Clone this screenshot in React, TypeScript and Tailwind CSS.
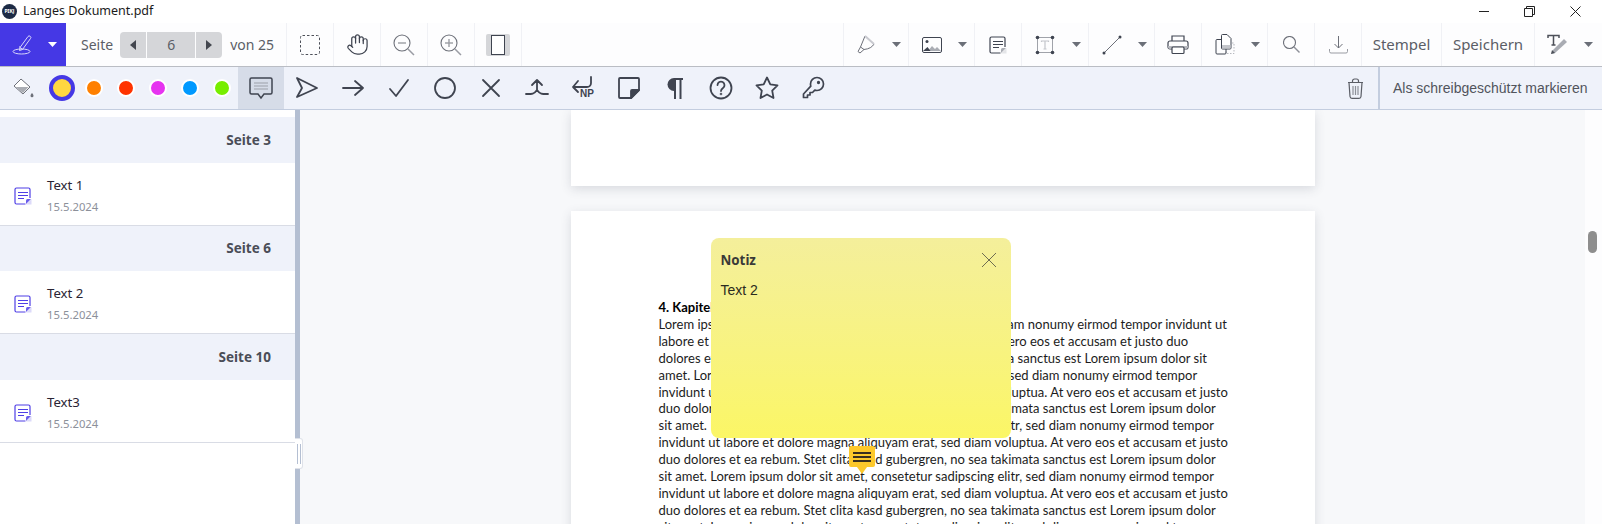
import type { ReactNode } from "react";

const ink = "#3f4450";

const loremLines = [
  "Lorem ipsum dolor sit amet, consetetur sadipscing elitr, sed diam nonumy eirmod tempor invidunt ut",
  "labore et dolore magna aliquyam erat, sed diam voluptua. At vero eos et accusam et justo duo",
  "dolores et ea rebum. Stet clita kasd gubergren, no sea takimata sanctus est Lorem ipsum dolor sit",
  "amet. Lorem ipsum dolor sit amet, consetetur sadipscing elitr, sed diam nonumy eirmod tempor",
  "invidunt ut labore et dolore magna aliquyam erat, sed diam voluptua. At vero eos et accusam et justo",
  "duo dolores et ea rebum. Stet clita kasd gubergren, no sea takimata sanctus est Lorem ipsum dolor",
  "sit amet. Lorem ipsum dolor sit amet, consetetur sadipscing elitr, sed diam nonumy eirmod tempor",
  "invidunt ut labore et dolore magna aliquyam erat, sed diam voluptua. At vero eos et accusam et justo",
  "duo dolores et ea rebum. Stet clita kasd gubergren, no sea takimata sanctus est Lorem ipsum dolor",
  "sit amet. Lorem ipsum dolor sit amet, consetetur sadipscing elitr, sed diam nonumy eirmod tempor",
  "invidunt ut labore et dolore magna aliquyam erat, sed diam voluptua. At vero eos et accusam et justo",
  "duo dolores et ea rebum. Stet clita kasd gubergren, no sea takimata sanctus est Lorem ipsum dolor",
  "sit amet. Lorem ipsum dolor sit amet, consetetur sadipscing elitr, sed diam nonumy eirmod tempor",
];

const notes = [
  { page: "Seite 3", title: "Text 1", head: "h-[46px]" },
  { page: "Seite 6", title: "Text 2", head: "h-[45px]" },
  { page: "Seite 10", title: "Text3", head: "h-[46px]" },
];

const Caret = ({ color = "#6b6f78" }: { color?: string }) => (
  <svg width="9" height="5" viewBox="0 0 9 5">
    <path d="M0 0h9L4.5 5z" fill={color} />
  </svg>
);

const Tool = ({ w, children }: { w: string; children: ReactNode }) => (
  <div className={`${w} flex shrink-0 items-center justify-center border-r border-[#f0f1f5]`}>{children}</div>
);

const CaretTool = ({ w, children }: { w: string; children: ReactNode }) => (
  <div className={`${w} flex shrink-0 items-center justify-between border-r border-[#f0f1f5] pl-[13px] pr-[7px]`}>
    {children}
    <Caret />
  </div>
);

const NoteIcon = ({ color = ink, fold = "#a9acb3", foldBg = "#e4e5e8" }: { color?: string; fold?: string; foldBg?: string }) => (
  <svg width="18" height="18" viewBox="0 0 18 18" fill="none">
    <path d="M12 17.500h5.500V12z" fill={foldBg} />
    <path d="M11.500 17H2.500A1.500 1.500 0 0 1 1 15.500V2.500A1.500 1.500 0 0 1 2.500 1h12A1.500 1.500 0 0 1 16 2.500V11" stroke={color} strokeWidth="1.200" />
    <path d="M4 5.500h10M4 8.500h10M4 11.500h6" stroke={color} strokeWidth="1.200" />
    <path d="M12 17v-3.500a1.500 1.500 0 0 1 1.500-1.500H17z" fill={fold} />
  </svg>
);

const Zoom = ({ plus }: { plus?: boolean }) => (
  <svg width="22" height="22" viewBox="0 0 22 22" fill="none" stroke="#6d7079" strokeWidth="1.100">
    <circle cx="9" cy="9" r="8" />
    <path d="M5 9h8" strokeWidth="1.400" stroke="#9a9ca3" />
    {plus && <path d="M9 5v8" strokeWidth="1.400" stroke="#9a9ca3" />}
    <path d="M15 15l6 6" stroke="#9a9ca3" strokeWidth="1.500" />
  </svg>
);

const TitleBar = () => (
  <div className="flex h-[23px] items-center bg-white pl-[2px]">
    <div className="flex h-[15px] w-[15px] items-center justify-center rounded-full bg-[#1d2b45] text-[5px] font-bold text-white">
      PIKJ
    </div>
    <span className="ml-[6px] font-['Noto_Sans',sans-serif] text-[12.500px] text-[#1b1b1b]">Langes Dokument.pdf</span>
    <div className="ml-auto mr-[21px] flex items-center gap-[35px]">
      <svg width="10" height="12" viewBox="0 0 10 12" fill="none" stroke="#222" strokeWidth="1">
        <path d="M0 5.500h10" />
      </svg>
      <svg width="11" height="11" viewBox="0 0 11 11" fill="none" stroke="#222" strokeWidth="1">
        <path d="M.5 2.500h8v8h-8zM2.500 2.500V.5h8v8h-2" />
      </svg>
      <svg width="11" height="11" viewBox="0 0 11 11" fill="none" stroke="#222" strokeWidth="1">
        <path d="M.5.5l10 10M10.500.5l-10 10" />
      </svg>
    </div>
  </div>
);

const TopBar = () => (
  <div className="flex h-[44px] items-stretch border-b border-[#babdc4] bg-[#fdfdfe] font-['Noto_Sans',sans-serif] text-[14px] text-[#5b5e66]">
    <div className="flex w-[66px] shrink-0 items-center gap-[15px] bg-[#4538e5] pl-[12px]">
      <svg width="21" height="21" viewBox="0 0 21 21" fill="none" stroke="#d9d6fb" strokeWidth="1">
        <ellipse cx="9.500" cy="17.500" rx="8.500" ry="2.500" />
        <path d="M8 13.500L16 2.500a1.500 1.500 0 0 1 2.200-.2 1.500 1.500 0 0 1 .3 2.200L10.500 15.500 7.500 16.500z" />
        <path d="M7 12.500l3.500 3" />
      </svg>
      <Caret color="#ffffff" />
    </div>
    <div className="flex w-[221px] shrink-0 items-center border-r border-[#f0f1f5] pl-[15px]">
      <span>Seite</span>
      <div className="ml-[7px] flex h-[26px] gap-px overflow-hidden rounded-[4px] text-[#5b5e66]">
        <div className="flex w-[26px] items-center justify-center bg-[#d5d6d9]">
          <svg width="6" height="10" viewBox="0 0 6 10"><path d="M6 0v10L0 5z" fill="#44474f" /></svg>
        </div>
        <div className="flex w-[48px] items-center justify-center bg-[#d5d6d9]">6</div>
        <div className="flex w-[26px] items-center justify-center bg-[#d5d6d9]">
          <svg width="6" height="10" viewBox="0 0 6 10"><path d="M0 0v10l6-5z" fill="#44474f" /></svg>
        </div>
      </div>
      <span className="ml-[8px]">von 25</span>
    </div>
    <Tool w="w-[47px]">
      <svg width="20" height="20" viewBox="0 0 20 20" fill="none" stroke="#4d5059" strokeWidth="1" strokeDasharray="2.500 2">
        <rect x="0.500" y="0.500" width="19" height="19" rx="2" />
      </svg>
    </Tool>
    <Tool w="w-[47px]">
      <svg width="23" height="23" viewBox="0 0 24 24" fill="none" stroke="#3f4450" strokeWidth="1.300" strokeLinecap="round" strokeLinejoin="round">
        <path d="M18 11V6a2 2 0 0 0-2-2 2 2 0 0 0-2 2" />
        <path d="M14 10V4a2 2 0 0 0-2-2 2 2 0 0 0-2 2v2" />
        <path d="M10 10.500V6a2 2 0 0 0-2-2 2 2 0 0 0-2 2v8" />
        <path d="M18 8a2 2 0 1 1 4 0v6a8 8 0 0 1-8 8h-2c-2.800 0-4.500-.860-5.990-2.340l-3.600-3.600a2 2 0 0 1 2.830-2.820L7 15" />
      </svg>
    </Tool>
    <Tool w="w-[47px]"><Zoom /></Tool>
    <Tool w="w-[47px]"><Zoom plus /></Tool>
    <Tool w="w-[47px]">
      <div className="flex h-[22px] w-[24px] items-center justify-center rounded-[2px] bg-[#d5d6d9]">
        <div className="h-[20px] w-[14px] border border-[#3f4450] bg-white" />
      </div>
    </Tool>

    <div className="ml-auto flex items-stretch border-l border-[#f0f1f5]">
      <CaretTool w="w-[65px]">
        <svg width="19" height="20" viewBox="0 0 19 20" fill="none" stroke="#6d7079" strokeWidth="1">
          <path d="M8 1l9 8c-1.500 3-5 5-10 5.500L3.500 12z" />
          <path d="M8 1l9 8" stroke="#c9cad0" strokeWidth="2" />
          <path d="M3.500 12L1 16.500l2 1.500 4-3.500" />
        </svg>
      </CaretTool>
      <CaretTool w="w-[66px]">
        <svg width="20" height="16" viewBox="0 0 20 16" fill="none">
          <path d="M6 14l4-5 3 3 2-2 4 4z" fill="#a9acb3" />
          <path d="M1 14l4.500-4 3 4z" fill="#3f4450" />
          <circle cx="5" cy="4.500" r="1.500" fill="#3f4450" />
          <rect x="0.500" y="0.500" width="19" height="15" rx="1.500" stroke="#3f4450" />
        </svg>
      </CaretTool>
      <Tool w="w-[47px]"><NoteIcon /></Tool>
      <CaretTool w="w-[67px]">
        <svg width="20" height="20" viewBox="0 0 20 20" fill="none">
          <rect x="2.500" y="2.500" width="15" height="15" stroke="#a0a3aa" />
          <path d="M6.500 7V6h7v1M10 6v8M8.500 14h3" stroke="#c4c6cb" strokeWidth="1.200" />
          <g fill="#3f4450">
            <circle cx="2.500" cy="2.500" r="1.800" />
            <circle cx="17.500" cy="2.500" r="1.800" />
            <circle cx="2.500" cy="17.500" r="1.800" />
            <circle cx="17.500" cy="17.500" r="1.800" />
          </g>
        </svg>
      </CaretTool>
      <CaretTool w="w-[66px]">
        <svg width="20" height="20" viewBox="0 0 20 20" fill="none">
          <path d="M2 18L18 2" stroke="#6d7079" />
          <circle cx="2" cy="18" r="1.500" fill="#3f4450" />
          <circle cx="18" cy="2" r="1.500" fill="#3f4450" />
        </svg>
      </CaretTool>
      <Tool w="w-[47px]">
        <svg width="22" height="20" viewBox="0 0 22 20" fill="none" stroke="#3f4450" strokeWidth="1.200">
          <path d="M5 6V1h12v5" />
          <path d="M5 14H3a2 2 0 0 1-2-2V8a2 2 0 0 1 2-2h16a2 2 0 0 1 2 2v4a2 2 0 0 1-2 2h-2" />
          <path d="M1 11h20v1a2 2 0 0 1-2 2H3a2 2 0 0 1-2-2z" fill="#b7b9bf" stroke="none" />
          <rect x="5" y="12" width="12" height="6.500" rx="1" fill="#fff" />
        </svg>
      </Tool>
      <CaretTool w="w-[66px]">
        <svg width="20" height="21" viewBox="0 0 20 21" fill="none" stroke="#3f4450" strokeWidth="1">
          <path d="M14 9h5v10.500h-8V17" stroke="#b7b9bf" strokeDasharray="1.500 1.500" />
          <path d="M7 5.500h-5a1 1 0 0 0-1 1V19a1 1 0 0 0 1 1h8a1 1 0 0 0 1-1V14" />
          <path d="M6.500 1.500a1 1 0 0 1 1-1H12l4 4V14a1 1 0 0 1-1 1H7.500a1 1 0 0 1-1-1z" fill="#fff" />
          <path d="M7 11h8.500v3.500H7z" fill="#c4c6cb" stroke="none" />
        </svg>
      </CaretTool>
      <Tool w="w-[47px]">
        <svg width="17" height="17" viewBox="0 0 17 17" fill="none" stroke="#6d7079" strokeWidth="1.100">
          <circle cx="6.500" cy="6.500" r="6" />
          <path d="M11 11l5.500 5.500" stroke="#8d9098" strokeWidth="1.400" />
        </svg>
      </Tool>
      <Tool w="w-[47px]">
        <svg width="19" height="19" viewBox="0 0 19 19" fill="none" stroke="#6d7079" strokeWidth="1">
          <path d="M9.500 1v12M5.500 9l4 4 4-4" />
          <path d="M.5 14v2.500a1.500 1.500 0 0 0 1.500 1.500h15a1.500 1.500 0 0 0 1.500-1.500V14" stroke="#9a9ca3" />
        </svg>
      </Tool>
      <Tool w="w-[80px]"><span className="text-[15px]">Stempel</span></Tool>
      <Tool w="w-[93px]"><span className="text-[15px]">Speichern</span></Tool>
      <div className="flex w-[67px] shrink-0 items-center justify-between pl-[12px] pr-[9px]">
        <svg width="21" height="21" viewBox="0 0 21 21" fill="none">
          <path d="M1 4V1.500h11V4M6.500 1.500V11M4.500 11h4" stroke="#4d5059" strokeWidth="1.500" />
          <path d="M4 20l4-1 12-11-3-3L6 16z" fill="#a9acb3" />
          <path d="M4 20l1-4 3 3z" fill="#4d5059" />
        </svg>
        <Caret />
      </div>
    </div>
  </div>
);

const Dot = ({ color }: { color: string }) => (
  <div className="flex h-[32px] w-[32px] items-center justify-center">
    <div className="h-[18px] w-[18px] rounded-full border-2 border-white" style={{ background: color }} />
  </div>
);

const Stroke = ({ children }: { children: ReactNode }) => (
  <div className="flex w-[46px] shrink-0 items-center justify-center">
    <svg width="24" height="24" viewBox="0 0 24 24" fill="none" stroke="#3f4450" strokeWidth="1.800" strokeLinecap="round" strokeLinejoin="round">
      {children}
    </svg>
  </div>
);

const AnnotationBar = () => (
  <div className="flex h-[43px] items-stretch border-b border-[#c3cddf] bg-[#eff2fa]">
    <div className="flex w-[46px] shrink-0 items-center justify-center">
      <svg width="22" height="20" viewBox="0 0 22 20" fill="none">
        <path d="M9 1l9 8-7 7-9-8z" stroke="#6d7079" strokeWidth="1" fill="#fff" />
        <path d="M3.500 9h13l-5.500 6z" fill="#a9acb3" />
        <path d="M20 15c1 1.300 1.500 2 1.500 2.700a1.500 1.500 0 0 1-3 0c0-.7.500-1.400 1.500-2.700z" fill="#6d7079" />
      </svg>
    </div>
    <div className="flex w-[32px] items-center justify-center">
      <div className="h-[26px] w-[26px] shrink-0 rounded-full border-[4px] border-[#4538e5] bg-[#ffd740]" />
    </div>
    <div className="flex items-center">
      <Dot color="#ff8000" />
      <Dot color="#ff3300" />
      <Dot color="#e633f0" />
      <Dot color="#0099ff" />
      <Dot color="#77ee00" />
    </div>
    <div className="flex w-[46px] shrink-0 items-center justify-center bg-[#d6dce8]">
      <svg width="24" height="23" viewBox="0 0 24 23" fill="none">
        <path d="M2.500 1h19A1.500 1.500 0 0 1 23 2.500v13a1.500 1.500 0 0 1-1.500 1.500H15l-3 4-3-4H2.500A1.500 1.500 0 0 1 1 15.500v-13A1.500 1.500 0 0 1 2.500 1z" stroke="#3f4450" strokeWidth="1.500" />
        <path d="M5 6h14M5 9h14M5 12h14" stroke="#9ca0a9" />
      </svg>
    </div>
    <Stroke>
      <path d="M2 2l20 10-20 9 5-9z" />
    </Stroke>
    <Stroke>
      <path d="M2 12h20M14 5l8 7-8 7" />
    </Stroke>
    <Stroke>
      <path d="M3 13l6 7L21 4" />
    </Stroke>
    <Stroke>
      <circle cx="12" cy="12" r="10" />
    </Stroke>
    <Stroke>
      <path d="M4 4l16 16M20 4L4 20" />
    </Stroke>
    <Stroke>
      <path d="M1 18c5 0 8 .5 11-4 3 4.500 6 4 11 4M12 14V4M7 9l5-5 5 5" />
    </Stroke>
    <div className="flex w-[46px] shrink-0 items-center justify-center">
      <div className="relative h-[24px] w-[24px]">
        <svg width="24" height="24" viewBox="0 0 24 24" fill="none" stroke="#3f4450" strokeWidth="1.800" strokeLinecap="round" strokeLinejoin="round">
          <path d="M20 1v6a4 4 0 0 1-4 4H2M7 5l-5 6 5 5" />
        </svg>
        <span className="absolute left-[9px] top-[12px] font-['Liberation_Sans',sans-serif] text-[10px] font-bold leading-[12px] text-[#3f4450]">NP</span>
      </div>
    </div>
    <Stroke>
      <path d="M22 14V3a1 1 0 0 0-1-1H3a1 1 0 0 0-1 1v18a1 1 0 0 0 1 1h11z" />
      <path d="M14 22v-7a1 1 0 0 1 1-1h7z" fill="#3f4450" />
    </Stroke>
    <div className="flex w-[46px] shrink-0 items-center justify-center">
      <svg width="16" height="21" viewBox="0 0 16 21">
        <path d="M7 0a6.500 6.500 0 0 0 0 13V0z" fill="#3f4450" />
        <path d="M7 1h9M8 0.500V21M13.500 0.500V21" stroke="#3f4450" strokeWidth="2" fill="none" />
      </svg>
    </div>
    <Stroke>
      <circle cx="12" cy="12" r="10.500" />
      <path d="M8.500 9a3.500 3.500 0 1 1 5.500 3c-1.300.9-2 1.500-2 3" />
      <circle cx="12" cy="18" r=".4" />
    </Stroke>
    <Stroke>
      <path d="M12 1.500l3.300 6.900 7.200 1-5.300 5.200 1.300 7.400L12 18.500 5.500 22l1.300-7.400L1.500 9.400l7.200-1z" />
    </Stroke>
    <div className="flex w-[46px] shrink-0 items-center justify-center">
      <svg width="24" height="24" viewBox="0 0 24 24" fill="none" stroke="#3f4450" strokeWidth="1.700" strokeLinecap="round" strokeLinejoin="round">
        <path d="M9.500 8a6.500 6.500 0 1 1 6.500 6.500c-.8 0-1.500-.1-2.200-.4L11.500 16.500H9v2.500H6.500v2.500H2.500v-3.500L9.800 10.200A6.500 6.500 0 0 1 9.500 8z" />
        <circle cx="17.500" cy="6.500" r=".8" />
      </svg>
    </div>
    <div className="ml-auto flex w-[46px] items-center justify-center">
      <svg width="17" height="21" viewBox="0 0 17 21" fill="none" stroke="#5b5e66" strokeWidth="1.200">
        <path d="M1 4.500h15M5.500 4.500V3a2 2 0 0 1 2-2h2a2 2 0 0 1 2 2v1.500" />
        <path d="M2 4.500h13l-1 14a2 2 0 0 1-2 1.800H5a2 2 0 0 1-2-1.800z" />
        <path d="M6 8v9M8.500 8v9M11 8v9" stroke="#8d9098" />
      </svg>
    </div>
    <div className="flex w-[224px] shrink-0 items-center border-l-2 border-[#c3cddf] pl-[13px] font-['Liberation_Sans',sans-serif] text-[14px] text-[#51545c]">
      Als schreibgeschützt markieren
    </div>
  </div>
);

const Sidebar = () => (
  <div className="relative flex w-[300px] shrink-0 flex-col border-r-[5px] border-[#b4bfd2] bg-white pt-[7px] font-['Noto_Sans',sans-serif]">
    {notes.map((n) => (
      <div key={n.page}>
        <div className={`${n.head} flex items-center justify-end bg-[#eff2fa] pr-[24px] text-[13.500px] font-bold text-[#4a4d57]`}>{n.page}</div>
        <div className="flex h-[63px] items-center border-b border-[#d9dce5] pl-[14px] pt-[4px]">
          <NoteIcon color="#4f3fe6" fold="#6a5cec" foldBg="#dcdaf9" />
          <div className="ml-[15px] flex flex-col">
            <span className="text-[13.200px] leading-[20px] text-[#2a2433]">{n.title}</span>
            <span className="mt-[2px] text-[11.300px] leading-[20px] text-[#8c909a]">15.5.2024</span>
          </div>
        </div>
      </div>
    ))}
    <div className="absolute right-[-8px] top-[328px] flex h-[31px] w-[8px] items-center justify-center gap-[2px] rounded-r-[3px] border border-l-0 border-[#dfe2e9] bg-white">
      <div className="h-[20px] w-px bg-[#b4bfd2]" />
      <div className="h-[20px] w-px bg-[#b4bfd2]" />
    </div>
  </div>
);

const NotePopup = () => (
  <>
    <div className="absolute left-[140px] top-[27px] h-[200px] w-[300px] rounded-[8px] bg-gradient-to-b from-[#f4ef9b] to-[#fbf665] px-[10px] pt-[11px]">
      <div className="flex items-center justify-between">
        <span className="font-['Noto_Sans',sans-serif] text-[13.300px] font-bold leading-[22px] text-[#3a3a38]">Notiz</span>
        <svg width="14" height="14" viewBox="0 0 14 14" stroke="#333" strokeWidth=".7" className="mr-[5px]">
          <path d="M0 0l14 14M14 0L0 14" />
        </svg>
      </div>
      <div className="mt-[9px] font-['Liberation_Sans',sans-serif] text-[14px] leading-[20px] text-[#2b2b20]">Text 2</div>
    </div>
    <div className="absolute left-[278px] top-[235px] flex h-[21px] w-[26px] flex-col items-center justify-center gap-[2px] rounded-[2px] bg-[#fdc92b]">
      <div className="h-[2px] w-[18px] bg-[#3a3020]" />
      <div className="h-[2px] w-[18px] bg-[#3a3020]" />
      <div className="h-[2px] w-[18px] bg-[#3a3020]" />
      <div className="absolute bottom-[-7px] left-[8px] h-0 w-0 border-x-[5px] border-t-[7px] border-x-transparent border-t-[#fdc92b]" />
    </div>
  </>
);

const Viewer = () => (
  <div className="flex min-w-0 flex-1 bg-[#f7f8fa]">
    <div className="flex min-w-0 flex-1 flex-col items-center overflow-hidden">
      <div className="h-[76px] w-[744px] shrink-0 bg-white shadow-[0_3px_10px_rgba(60,70,90,0.16)]" />
      <div className="relative mt-[25px] w-[744px] shrink-0 bg-white pl-[88px] pt-[88px] font-['Lato',sans-serif] text-[13px] leading-[16.900px] text-[#1c1c1c] shadow-[0_3px_10px_rgba(60,70,90,0.16)]">
        <div className="font-bold text-black">4. Kapitel</div>
        {loremLines.map((line, i) => (
          <div key={i} className="whitespace-nowrap">{line}</div>
        ))}
        <NotePopup />
      </div>
    </div>
    <div className="relative w-[17px] shrink-0 bg-[#fdfdfe]">
      <div className="absolute left-[3px] top-[121px] h-[22px] w-[9px] rounded-full bg-[#8e8e8e]" />
    </div>
  </div>
);

export default function App() {
  return (
    <div className="flex h-[524px] w-[1602px] flex-col overflow-hidden bg-white">
      <TitleBar />
      <TopBar />
      <AnnotationBar />
      <div className="flex min-h-0 flex-1">
        <Sidebar />
        <Viewer />
      </div>
    </div>
  );
}
